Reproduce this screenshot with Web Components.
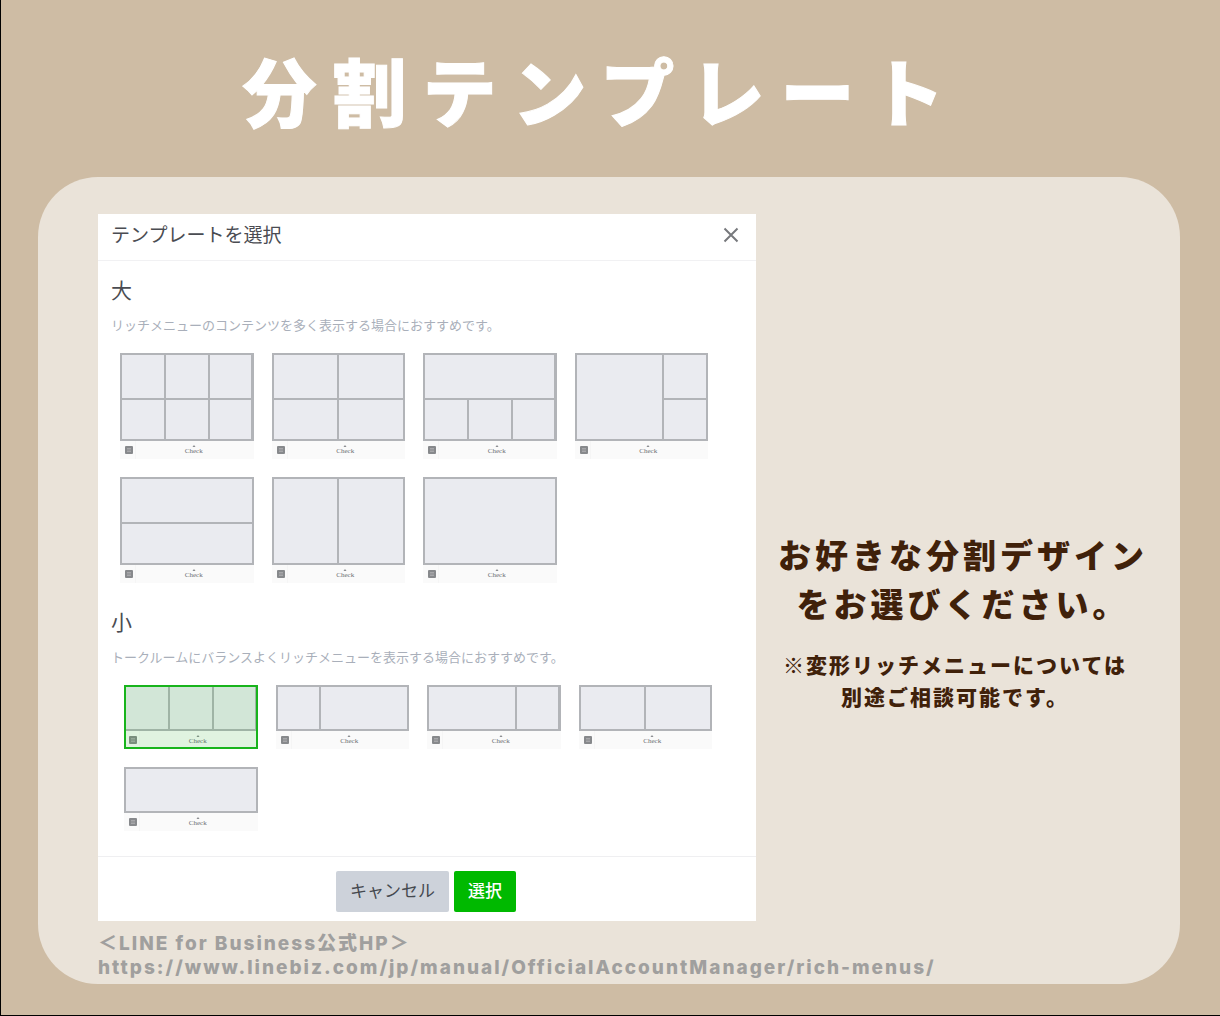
<!DOCTYPE html>
<html lang="ja">
<head>
<meta charset="utf-8">
<title>分割テンプレート</title>
<style>
  html, body { margin: 0; }
  body { font-family: "Noto Sans CJK JP", sans-serif; background: #cebca4; }
</style>
</head>
<body>
<slide-page>
  <span slot="title">分割テンプレート</span>
  <template-dialog></template-dialog>
  <side-note slot="side">
    <span>お好きな分割デザイン<br>をお選びください。</span>
    <span slot="note">※変形リッチメニューについては<br>別途ご相談可能です。</span>
  </side-note>
  <source-credit slot="credit" href="https://www.linebiz.com/jp/manual/OfficialAccountManager/rich-menus/">＜LINE for Business公式HP＞</source-credit>
</slide-page>

<script>
const define = (name, html, setup) => {
  const template = document.createElement('template');
  template.innerHTML = html;
  customElements.define(name, class extends HTMLElement {
    constructor() {
      super();
      this.attachShadow({ mode: 'open' }).append(template.content.cloneNode(true));
    }
    connectedCallback() { if (setup) setup(this, this.shadowRoot); }
  });
};

define('slide-page', `
  <style>
    :host { display: flex; flex-direction: column; box-sizing: border-box; min-height: 100vh;
      background: #cebca4; border-left: 1px solid #000; border-bottom: 1px solid #000; }
    h1 { margin: 0; padding: 45px 18px 44px 0; text-align: center; color: #fff;
      font-size: 74px; line-height: 88px; font-weight: 900; letter-spacing: 16px;
      -webkit-text-stroke: 1px #fff; }
    main { display: grid; grid-template-columns: 658fr 414fr; margin: 0 40px 31px 37px;
      padding: 37px 10px 4px 60px; border-radius: 60px; background: #eae3d9; }
    .side { display: grid; align-items: center; padding-top: 106px; }
    .credit { grid-column: 1 / -1; padding-top: 11px; }
  </style>
  <h1><slot name="title"></slot></h1>
  <main>
    <slot></slot>
    <div class="side"><slot name="side"></slot></div>
    <div class="credit"><slot name="credit"></slot></div>
  </main>`);

define('side-note', `
  <style>
    :host { display: block; text-align: center; color: #40210a; font-weight: 900; white-space: nowrap; }
    p { margin: 0; }
    .lead { font-size: 33px; line-height: 49px; letter-spacing: 4px; }
    .note { margin: 20px 16px 0 0; font-size: 21px; line-height: 32px; letter-spacing: 2px; }
  </style>
  <p class="lead"><slot></slot></p>
  <p class="note"><slot name="note"></slot></p>`);

define('source-credit', `
  <style>
    :host { display: block; color: #a09f9e; font: 800 19px/24px Inter, "Noto Sans CJK JP", sans-serif; letter-spacing: 2px; }
    p { margin: 0; }
    a { color: inherit; text-decoration: none; }
  </style>
  <p><slot></slot></p>
  <p><a></a></p>`, (host, root) => {
    const link = root.querySelector('a');
    link.href = link.textContent = host.getAttribute('href');
  });

define('template-dialog', `
  <style>
    :host { display: block; background: #fff; color: #4a4c52; }
    header { display: flex; align-items: center; justify-content: space-between;
      box-sizing: border-box; height: 47px; padding: 0 17px 7px 13px; border-bottom: 1px solid #f1f1f3; }
    h2 { margin: 0; font-size: 19px; line-height: 28px; font-weight: 400; }
    button { font-family: inherit; border: 0; }
    .close { display: flex; padding: 0; margin-top: 3px; background: none; }
    .body { display: grid; gap: 23px; padding: 13px 0 25px; }
    footer { display: flex; justify-content: center; gap: 5px; padding: 14px 2px 9px 0;
      border-top: 1px solid #efeff1; }
    footer button { height: 41px; padding: 0 14px 3px; border-radius: 2px; font-size: 17px; line-height: 24px; }
    .cancel { background: #cdd2da; color: #45494f; }
    .ok { background: #00b900; color: #fff; font-weight: 500; }
  </style>
  <header>
    <h2>テンプレートを選択</h2>
    <button class="close" type="button" aria-label="閉じる">
      <svg width="16" height="16" viewBox="0 0 16 16" fill="none" stroke="#77797d" stroke-width="2"><path d="M1.5 1.5l13 13M14.5 1.5l-13 13"/></svg>
    </button>
  </header>
  <div class="body">
    <template-group heading="大" note="リッチメニューのコンテンツを多く表示する場合におすすめです。">
      <template-option areas="a a b b c c / d d e e f f" label="大 6分割"></template-option>
      <template-option areas="a a a b b b / c c c d d d" label="大 4分割"></template-option>
      <template-option areas="a a a a a a / b b c c d d" label="大 上1 下3分割"></template-option>
      <template-option areas="a a a a b b / a a a a c c" label="大 左1 右2分割"></template-option>
      <template-option areas="a a a a a a / b b b b b b" label="大 上下2分割"></template-option>
      <template-option areas="a a a b b b / a a a b b b" label="大 左右2分割"></template-option>
      <template-option areas="a a a a a a / a a a a a a" label="大 分割なし"></template-option>
    </template-group>
    <template-group small heading="小" note="トークルームにバランスよくリッチメニューを表示する場合におすすめです。">
      <template-option small checked areas="a a b b c c" label="小 3分割"></template-option>
      <template-option small areas="a a b b b b" label="小 左小 右大"></template-option>
      <template-option small areas="a a a a b b" label="小 左大 右小"></template-option>
      <template-option small areas="a a a b b b" label="小 2分割"></template-option>
      <template-option small areas="a a a a a a" label="小 分割なし"></template-option>
    </template-group>
  </div>
  <footer>
    <button class="cancel" type="button">キャンセル</button>
    <button class="ok" type="button">選択</button>
  </footer>`, (host, root) => {
    const options = [...root.querySelectorAll('template-option')];
    root.addEventListener('pick', (e) => {
      options.forEach((o) => { o.shadowRoot.querySelector('input').checked = o === e.target; });
    });
  });

define('template-group', `
  <style>
    :host { display: block; }
    h3 { margin: 0 13px; font-size: 21px; line-height: 30px; font-weight: 400; }
    p { margin: 11px 13px 18px; font-size: 13px; line-height: 20px; color: #a9afba; }
    .options { display: grid; grid-template-columns: repeat(4, 1fr); gap: 18px; padding: 0 48px 0 22px; }
    :host([small]) .options { padding: 0 44px 0 26px; }
  </style>
  <h3></h3>
  <p></p>
  <div class="options"><slot></slot></div>`, (host, root) => {
    root.querySelector('h3').textContent = host.getAttribute('heading');
    root.querySelector('p').textContent = host.getAttribute('note');
  });

define('template-option', `
  <style>
    :host { display: block; }
    label { display: grid; }
    input, .thumb { grid-area: 1 / 1; }
    input { appearance: none; margin: 0; z-index: 1; }
    input:checked { border: 2px solid #18b41c; background: rgba(0, 190, 0, .1); }
    .cells { display: grid; gap: 2px; box-sizing: border-box; height: 88px; padding: 2px; background: #b2b4b8;
      grid-template-columns: repeat(6, 1fr); grid-template-rows: 43fr 39fr; }
    :host([small]) .cells { height: 46px; grid-template-rows: 1fr; }
    .cells i { background: #eaebf0; }
    .bar { display: grid; grid-template-columns: 16px 1fr; height: 18px; background: #fafafa; }
    .icon { display: flex; padding: 5px 0 0 5px; border-right: 1px solid #f5f5f5; }
    .check { display: flex; flex-direction: column; align-items: center; padding: 4px 2px 0 0;
      color: #6c6e72; font: 7px/8px "Liberation Serif", serif; }
  </style>
  <label>
    <input type="radio" name="template">
    <span class="thumb">
      <span class="cells"></span>
      <span class="bar">
        <span class="icon"><svg width="8" height="8" viewBox="0 0 8 8"><rect width="8" height="8" rx="1" fill="#87898c"/><path d="M2 2.5h4M2 4h4M2 5.5h4" stroke="#b4b5b8" stroke-width=".7"/></svg></span>
        <span class="check"><svg width="4" height="2" viewBox="0 0 4 2"><path d="M.5 2L2 0l1.500 2z" fill="#8a8c90"/></svg>Check</span>
      </span>
    </span>
  </label>`, (host, root) => {
    const areas = host.getAttribute('areas');
    const cells = root.querySelector('.cells');
    cells.style.gridTemplateAreas = areas.split(' / ').map((row) => `"${row}"`).join(' ');
    for (const name of new Set(areas.match(/[a-z]/g))) {
      const cell = document.createElement('i');
      cell.style.gridArea = name;
      cells.append(cell);
    }
    const input = root.querySelector('input');
    input.setAttribute('aria-label', host.getAttribute('label'));
    input.checked = host.hasAttribute('checked');
    input.addEventListener('change', () => host.dispatchEvent(new Event('pick', { bubbles: true })));
  });
</script>
</body>
</html>
